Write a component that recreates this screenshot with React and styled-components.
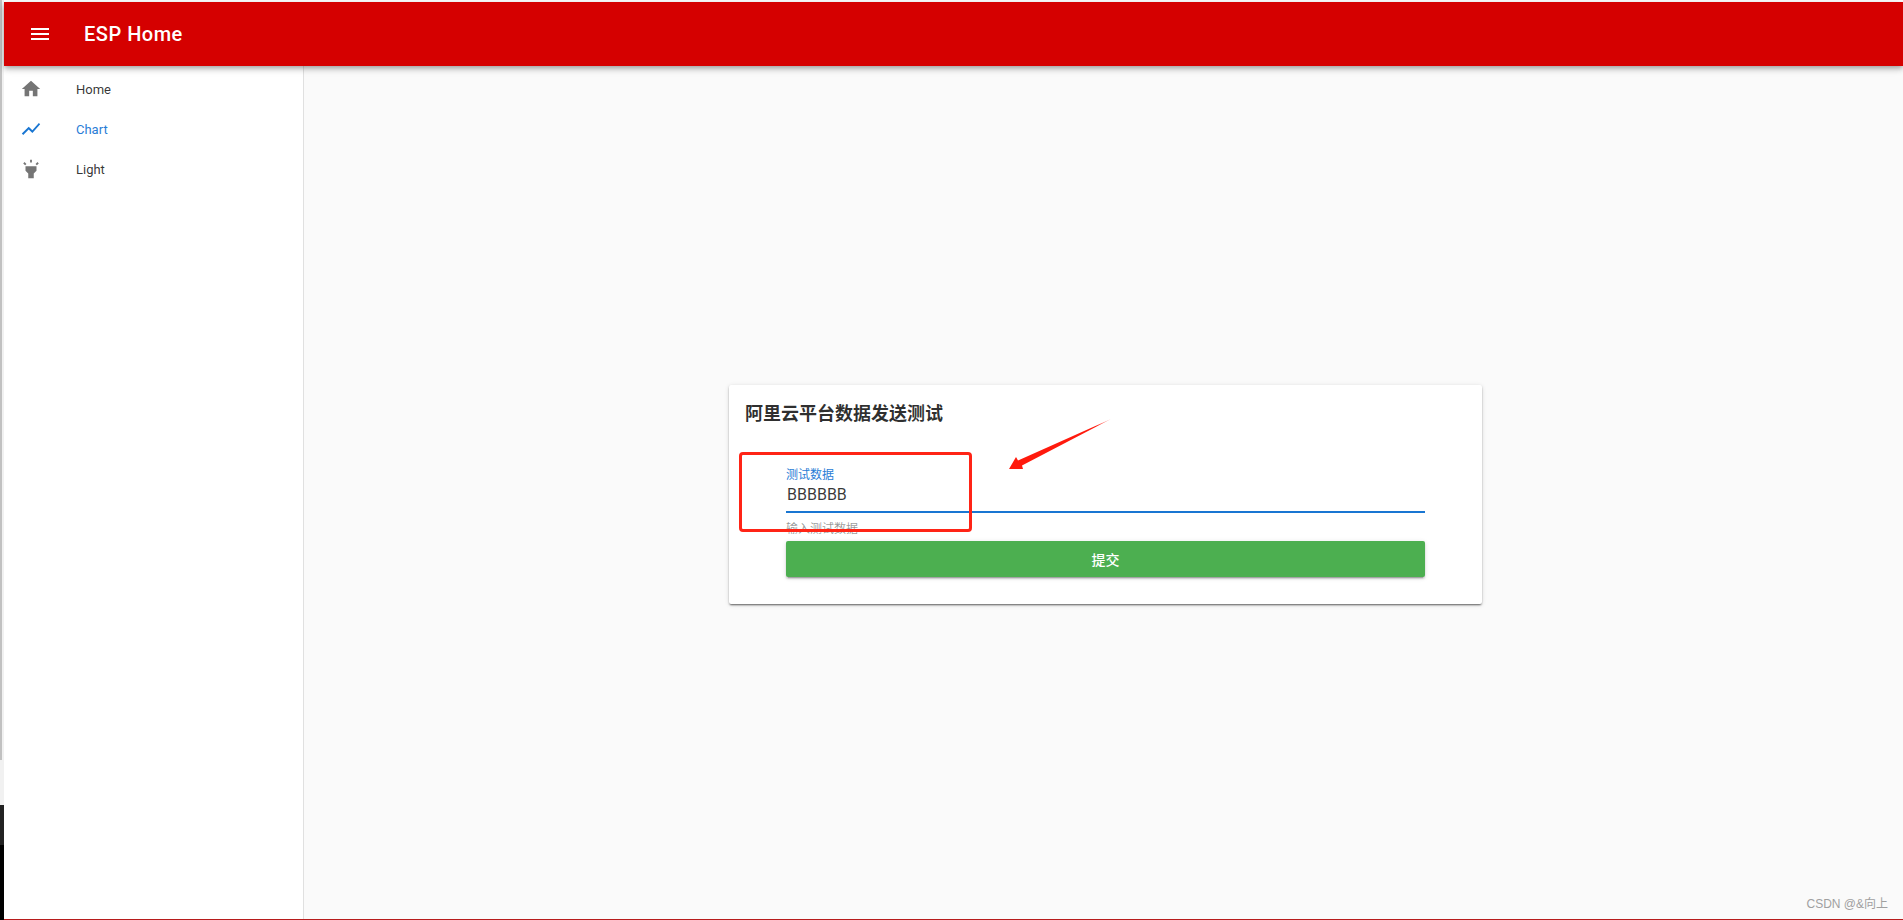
import styled, { createGlobalStyle } from "styled-components";

const GlobalStyle = createGlobalStyle`
    html, body {
        margin: 0;
        height: 100%;
        overflow: hidden;
        background-color: #fafafa;
        font-family: Roboto, "Noto Sans CJK SC", sans-serif;
    }
`

function Icon({ d, size = 22 }) {
    return (
        <svg width={size} height={size} viewBox="0 0 24 24" fill="currentColor">
            <path d={d} />
        </svg>
    )
}

const MENU = "M3 18h18v-2H3v2zm0-5h18v-2H3v2zm0-7v2h18V6H3z";
const HOME = "M10 20v-6h4v6h5v-8h3L12 3 2 12h3v8z";
const CHART = "M3.5 18.49l6-6.01 4 4L22 6.92l-1.41-1.41-7.09 7.97-4-4L2 16.99z";
const LIGHT = "M6 14l3 3v5h6v-5l3-3V9H6zm5-12h2v3h-2zM3.5 5.875L4.914 4.46l2.12 2.122L5.62 7.996zm13.46.71l2.123-2.12 1.414 1.414L18.375 8z";

const navItems = [
    { label: "Home", icon: HOME },
    { label: "Chart", icon: CHART, active: true },
    { label: "Light", icon: LIGHT },
];

function App() {
    return (
        <Screen>
            <GlobalStyle />
            <Gutter>
                <Track><Thumb /></Track>
                <Taskbar />
                <TaskbarEnd />
            </Gutter>
            <Frame>
                <AppBar>
                    <MenuButton><Icon d={MENU} size={24} /></MenuButton>
                    <Title>ESP Home</Title>
                </AppBar>
                <Body>
                    <Sidebar>
                        {navItems.map((item) => (
                            <NavItem key={item.label} $active={item.active}>
                                <NavIcon $active={item.active}><Icon d={item.icon} /></NavIcon>
                                {item.label}
                            </NavItem>
                        ))}
                    </Sidebar>
                    <Main>
                        <Card>
                            <CardTitle>阿里云平台数据发送测试</CardTitle>
                            <Form>
                                <Label>测试数据</Label>
                                <Input defaultValue="BBBBBB" />
                                <Hint>输入测试数据</Hint>
                                <Submit>提交</Submit>
                            </Form>
                            <RedBox />
                            <Arrow width="110" height="60" viewBox="0 0 110 60">
                                <defs>
                                    <linearGradient id="fade" gradientUnits="userSpaceOnUse" x1="4" y1="54" x2="106" y2="4">
                                        <stop offset="0" stopColor="#ff1a0d" />
                                        <stop offset="0.85" stopColor="#ff1a0d" />
                                        <stop offset="1" stopColor="#ff1a0d" stopOpacity="0.35" />
                                    </linearGradient>
                                </defs>
                                <polygon points="4,54 11,42 13,45.5 106,4 17,50.5 18,54" fill="url(#fade)" />
                            </Arrow>
                        </Card>
                        <Watermark>CSDN @&amp;向上</Watermark>
                    </Main>
                </Body>
            </Frame>
        </Screen>
    )
}

export default App;

const Screen = styled.div`
    display: flex;
    height: 920px;
    overflow: hidden;
`

const Gutter = styled.div`
    width: 4px;
    flex-shrink: 0;
    display: flex;
    flex-direction: column;
`

const Track = styled.div`
    height: 805px;
    background-color: #f1f1f1;
`

const Thumb = styled.div`
    width: 2px;
    height: 760px;
    background-color: #c1c1c1;
`

const Taskbar = styled.div`
    height: 40px;
    background-color: #222222;
`

const TaskbarEnd = styled.div`
    flex: 1;
    background-color: #000000;
`

const Frame = styled.div`
    flex: 1;
    display: flex;
    flex-direction: column;
    padding-top: 2px;
    background-color: #ffffff;
    border-bottom: 1px solid #b71c1c;
`

const AppBar = styled.header`
    height: 64px;
    flex-shrink: 0;
    display: flex;
    align-items: center;
    padding-left: 24px;
    background-color: #d50000;
    color: white;
    box-shadow: 0 2px 4px -1px rgba(0,0,0,.2), 0 4px 5px 0 rgba(0,0,0,.14), 0 1px 10px 0 rgba(0,0,0,.12);
    position: relative;
    z-index: 1;
`

const MenuButton = styled.div`
    display: flex;
    margin-right: 32px;
`

const Title = styled.h1`
    margin: 0;
    font-size: 20px;
    font-weight: 500;
    letter-spacing: 0.5px;
`

const Body = styled.div`
    flex: 1;
    display: flex;
    min-height: 0;
`

const Sidebar = styled.nav`
    width: 299px;
    flex-shrink: 0;
    padding-top: 3px;
    background-color: white;
    border-right: 1px solid #e0e0e0;
`

const NavItem = styled.div`
    height: 40px;
    display: flex;
    align-items: center;
    padding-left: 16px;
    font-size: 13px;
    color: ${(p) => (p.$active ? "#2a7dd6" : "rgba(0,0,0,.8)")};
`

const NavIcon = styled.span`
    display: flex;
    margin-right: 34px;
    color: ${(p) => (p.$active ? "#1976d2" : "#757575")};
`

const Main = styled.main`
    flex: 1;
    position: relative;
    display: flex;
    align-items: center;
    justify-content: center;
    padding: 4px 0 0 4px;
    background-color: #fafafa;
`

const Card = styled.section`
    width: 753px;
    height: 219px;
    box-sizing: border-box;
    position: relative;
    padding: 18px 16px 0;
    background-color: white;
    border-radius: 2px;
    box-shadow: 0 2px 2px -1px rgba(0,0,0,.45), 0 1px 2px 0 rgba(0,0,0,.2), 0 1px 5px 0 rgba(0,0,0,.12);
`

const CardTitle = styled.h2`
    margin: 0;
    font-size: 18px;
    line-height: 22px;
    font-weight: 700;
    color: rgba(0,0,0,.82);
`

const Form = styled.div`
    display: flex;
    flex-direction: column;
    margin: 43px 41px 0;
`

const Label = styled.label`
    font-size: 12px;
    line-height: 14px;
    color: #2a7dd6;
`

const Input = styled.input`
    height: 29px;
    padding: 0 1px 4px;
    box-sizing: content-box;
    height: 25px;
    border: none;
    border-bottom: 2px solid #1976d2;
    outline: none;
    background: transparent;
    font-family: inherit;
    font-size: 16px;
    color: rgba(0,0,0,.78);
`

const Hint = styled.div`
    margin-top: 9px;
    height: 19px;
    font-size: 12px;
    line-height: 14px;
    color: rgba(0,0,0,.42);
`

const Submit = styled.button`
    height: 36px;
    border: none;
    border-radius: 2px;
    background-color: #4caf50;
    color: white;
    font-family: inherit;
    font-size: 14px;
    font-weight: 500;
    box-shadow: 0 3px 1px -2px rgba(0,0,0,.2), 0 2px 2px 0 rgba(0,0,0,.14), 0 1px 5px 0 rgba(0,0,0,.12);
`

const RedBox = styled.div`
    position: absolute;
    left: 10px;
    top: 67px;
    width: 233px;
    height: 80px;
    box-sizing: border-box;
    border: 3px solid #ff2416;
    border-radius: 4px;
`

const Arrow = styled.svg`
    position: absolute;
    left: 276px;
    top: 30px;
`

const Watermark = styled.div`
    position: absolute;
    right: 15px;
    bottom: 8px;
    font-family: "Liberation Sans", "Noto Sans CJK SC", sans-serif;
    font-size: 12px;
    color: #a0a0a0;
`
